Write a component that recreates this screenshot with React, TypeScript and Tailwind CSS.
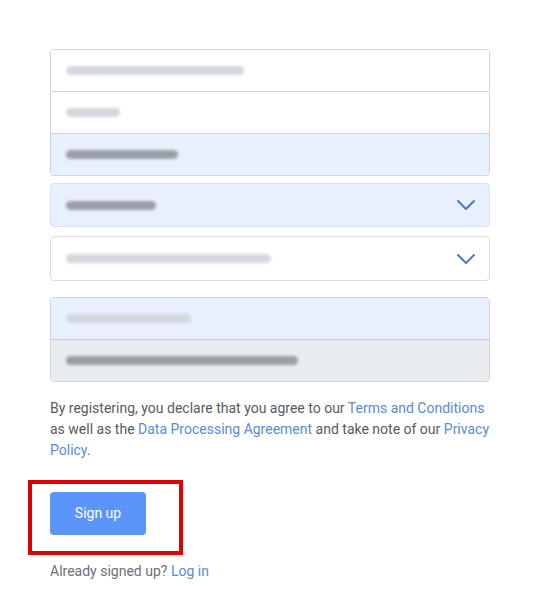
import { ChevronDown } from "lucide-react";

function Smear({ w, dark = false }: { w: number; dark?: boolean }) {
  return (
    <div
      className={`h-[9px] rounded-full blur-[1.5px] ${dark ? "bg-[#9a9ea6]" : "bg-[#d4d7dc]"}`}
      style={{ width: w }}
    />
  );
}

export default function App() {
  return (
    <div className="min-h-[609px] bg-white font-['Roboto',sans-serif]">
      <div className="w-[440px] ml-[50px] pt-[49px]">
        {/* first group */}
        <div className="rounded-[4px] border border-[#cdd5e2] overflow-hidden">
          <div className="h-[42px] bg-white flex items-center px-[15px] border-b border-[#cdd5e2]">
            <Smear w={178} />
          </div>
          <div className="h-[42px] bg-white flex items-center px-[15px] border-b border-[#cdd5e2]">
            <Smear w={54} />
          </div>
          <div className="h-[41px] bg-[#e8f0fe] flex items-center px-[15px]">
            <Smear w={112} dark />
          </div>
        </div>

        {/* selects */}
        <div className="mt-[7px] h-[44px] rounded-[4px] border border-[#d9e2f0] bg-[#e8f0fe] flex items-center justify-between pl-[15px] pr-[7px]">
          <Smear w={90} dark />
          <ChevronDown size={32} strokeWidth={1.5} className="text-[#4a78c9]" />
        </div>
        <div className="mt-[9px] h-[45px] rounded-[4px] border border-[#d9dde3] bg-white flex items-center justify-between pl-[15px] pr-[7px]">
          <Smear w={205} />
          <ChevronDown size={32} strokeWidth={1.5} className="text-[#4a78c9]" />
        </div>

        {/* second group */}
        <div className="mt-[16px] rounded-[4px] border border-[#cdd5e2] overflow-hidden">
          <div className="h-[42px] bg-[#e8f0fe] flex items-center px-[15px] border-b border-[#c5d0e2]">
            <Smear w={125} />
          </div>
          <div className="h-[41px] bg-[#e9ecef] flex items-center px-[15px]">
            <Smear w={232} dark />
          </div>
        </div>

        <p className="mt-[16px] text-[14px] leading-[21px] text-[#555b63]">
          By registering, you declare that you agree to our{" "}
          <a className="text-[#5a8ad6]">Terms and Conditions</a> as well as the{" "}
          <a className="text-[#5a8ad6]">Data Processing Agreement</a> and take note of our{" "}
          <a className="text-[#5a8ad6]">Privacy Policy</a>.
        </p>

        <div className="relative mt-[31px] w-[96px]">
          <button className="w-[96px] h-[43px] rounded-[4px] bg-[#5b95f9] text-white text-[14px]">
            Sign up
          </button>
          <div className="absolute left-[-22px] top-[-12px] w-[155px] h-[75px] border-[4px] border-[#e00000] pointer-events-none" />
        </div>

        <p className="mt-[26px] text-[14px] leading-[21px] text-[#6b7078]">
          Already signed up? <a className="text-[#5a8ad6]">Log in</a>
        </p>
      </div>
    </div>
  );
}
